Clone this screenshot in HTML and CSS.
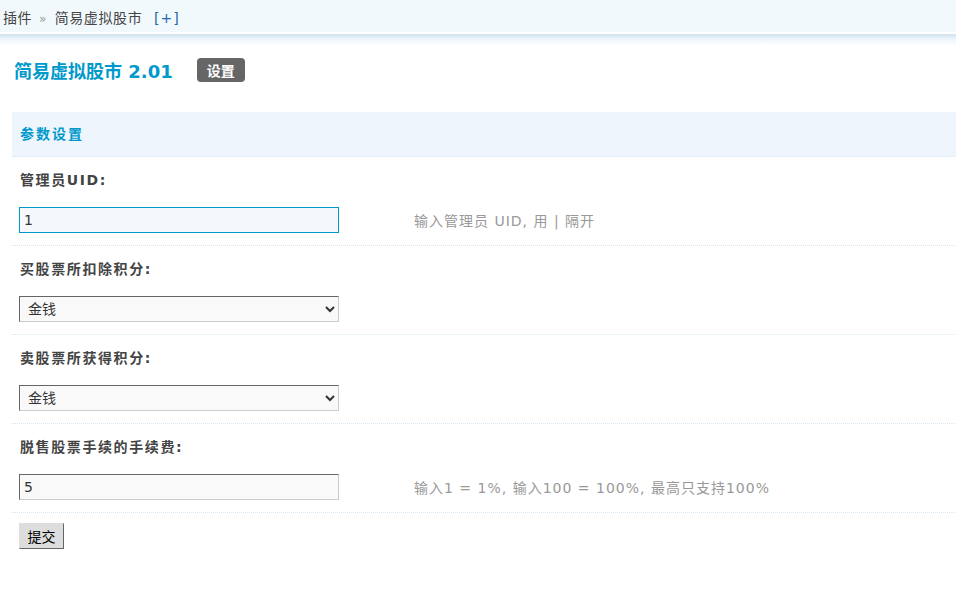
FILE: index.html
```html
<!DOCTYPE html>
<html lang="zh-CN">
<head>
  <meta charset="UTF-8" />
  <title>简易虚拟股市 - 插件设置</title>
  <link rel="stylesheet" href="styles.css">
</head>
<body>

  <div class="nav">插件 <span class="sep">&raquo;</span> 简易虚拟股市 <a class="more" href="#">[+]</a></div>
  <div class="navshadow"></div>

  <div class="pagehead">
    <h3>简易虚拟股市 2.01</h3>
    <span class="tab">设置</span>
  </div>

  <form class="tb">
    <div class="th">参数设置</div>

    <div class="lbl">管理员UID:</div>
    <div class="field">
      <div class="cell"><input type="text" class="txt focus" value="1" /></div>
      <div class="tip">输入管理员 UID, 用 | 隔开</div>
    </div>

    <div class="lbl">买股票所扣除积分:</div>
    <div class="field">
      <div class="cell">
        <select class="ps">
          <option>金钱</option>
          <option>威望</option>
          <option>贡献</option>
        </select>
      </div>
      <div class="tip"></div>
    </div>

    <div class="lbl">卖股票所获得积分:</div>
    <div class="field">
      <div class="cell">
        <select class="ps">
          <option>金钱</option>
          <option>威望</option>
          <option>贡献</option>
        </select>
      </div>
      <div class="tip"></div>
    </div>

    <div class="lbl">脱售股票手续的手续费:</div>
    <div class="field">
      <div class="cell"><input type="text" class="txt" value="5" /></div>
      <div class="tip">输入1 = 1%, 输入100 = 100%, 最高只支持100%</div>
    </div>

    <div class="submit"><button type="button" class="btn">提交</button></div>
  </form>

</body>
</html>
```

FILE: styles.css
```css
body {
  margin: 0;
  background: #fff;
  color: #333;
  font: 14px "DejaVu Sans", "Noto Sans CJK SC", sans-serif;
}
.nav {
  height: 32px;
  line-height: 34px;
  padding-left: 3px;
  background: #f2f9fd;
  border-bottom: 2px solid #fff;
  color: #444;
  font-family: "Noto Sans CJK SC", sans-serif;
  letter-spacing: 0.6px;
}
.nav .sep {
  color: #999;
  font-family: "DejaVu Sans", sans-serif;
  font-size: 12px;
  margin: 0 4px 0 3px;
}
.nav .more {
  color: #2366a8;
  text-decoration: none;
  margin-left: 8px;
  letter-spacing: 1px;
  font-family: "DejaVu Sans", sans-serif;
}
.navshadow {
  height: 12px;
  background: linear-gradient(#cfe2ec, #eef6fb 45%, #fff);
}
.pagehead {
  display: flex;
  align-items: center;
  height: 24px;
  margin: 12px 0 30px 14px;
}
.pagehead h3 {
  margin: 0;
  font-size: 18px;
  color: #09c;
  font-weight: bold;
}
.tab {
  margin-left: 24px;
  height: 24px;
  line-height: 24px;
  padding: 0 10px;
  background: #666;
  color: #fff;
  font-weight: bold;
  border-radius: 4px;
  font-family: "Noto Sans CJK SC", sans-serif;
}
.tb {
  margin-left: 12px;
}
.th {
  height: 44px;
  line-height: 44px;
  padding-left: 8px;
  background: #eef5fc;
  color: #09c;
  font-weight: bold;
  letter-spacing: 2px;
  border-bottom: 1px dotted #dde9f2;
}
.lbl {
  height: 29px;
  padding: 14px 8px 0;
  line-height: 18px;
  font-weight: bold;
  color: #444;
  letter-spacing: 1.6px;
}
.field {
  display: grid;
  grid-template-columns: 403px 1fr;
  align-items: center;
  padding: 7px 0 12px;
  border-bottom: 1px dotted #d6e6f1;
}
.cell {
  padding-left: 7px;
  display: flex;
}
.txt, .ps {
  box-sizing: border-box;
  width: 320px;
  height: 26px;
  margin: 0;
  font: 14px "DejaVu Sans", "Noto Sans CJK SC", sans-serif;
  color: #333;
  background: #f9f9f9;
  border: 1px solid;
  border-color: #666 #ccc #ccc #666;
  border-radius: 0;
}
.txt {
  padding: 0 4px;
}
.ps {
  padding: 0 4px;
}
.txt.focus {
  border-color: #09c;
  background: #f4f8fd;
  outline: none;
}
.tip {
  color: #999;
  letter-spacing: 1px;
  margin-left: -1px;
}
.submit {
  padding: 10px 7px;
}
.btn {
  height: 26px;
  width: 45px;
  padding: 0;
  font: 14px "Noto Sans CJK SC", sans-serif;
  color: #000;
  background: #ddd;
  border: 1px solid;
  border-color: #ddd #666 #666 #ddd;
  border-radius: 0;
}
```
